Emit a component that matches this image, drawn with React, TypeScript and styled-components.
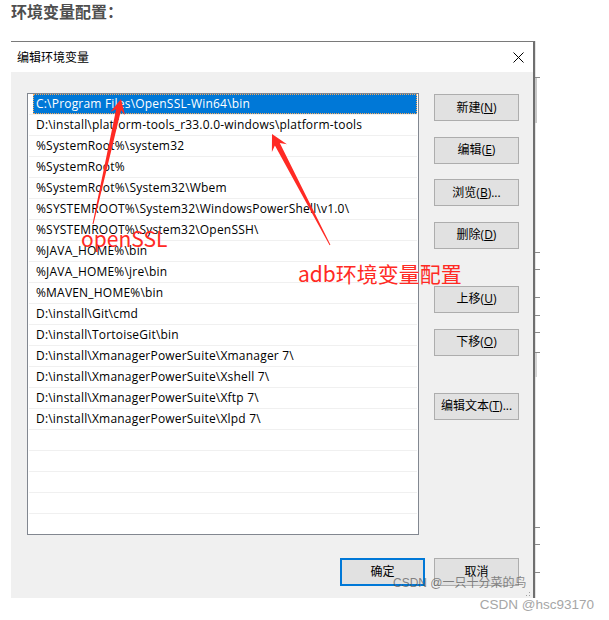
import React from "react";
import styled, { createGlobalStyle, css } from "styled-components";

const UI_FONT = `"Open Sans", "Noto Sans CJK SC", sans-serif`;
const CJK_FONT = `"Noto Sans CJK SC", "Noto Sans", sans-serif`;
const RED = "#ff2a24";

const GlobalStyle = createGlobalStyle`
  html, body { margin: 0; padding: 0; background: #fff; }
  body { font-family: ${UI_FONT}; }
`;

const Page = styled.div`
  position: relative;
  width: 609px;
  height: 620px;
  overflow: hidden;
`;

const Heading = styled.h4`
  margin: 0;
  padding-left: 11px;
  font: 700 16px/23px ${CJK_FONT};
  color: #4f4f4f;
`;

const Stage = styled.div`
  display: flex;
  margin: 18px 0 0 11px;
`;

const Dialog = styled.div`
  width: 524px;
  box-sizing: border-box;
  border-top: 1px solid #7a7a7a;
  border-right: 2px solid #6f6f6f;
  display: flex;
  flex-direction: column;
`;

const TitleBar = styled.div`
  height: 30px;
  background: #fff;
  display: flex;
  align-items: center;
  justify-content: space-between;
  padding: 0 9px 0 6px;
`;

const Title = styled.span`
  font: 400 12px/16px ${CJK_FONT};
  color: #000;
`;

const CloseIcon = styled.svg`
  width: 11px;
  height: 11px;
  display: block;
`;

const Body = styled.div`
  position: relative;
  background: #f0f0f0;
  padding: 21px 14px 12px 16px;
`;

const Main = styled.div`
  display: flex;
  gap: 15px;
`;

const ListBox = styled.div`
  width: 392px;
  height: 442px;
  box-sizing: border-box;
  border: 1px solid #828790;
  background: #fff;
  padding: 0 1px;
  overflow: hidden;
`;

const Row = styled.div`
  height: 21px;
  box-sizing: border-box;
  border-bottom: 1px solid #f0f0f0;
  padding-left: 4px;
  display: flex;
`;

const Cell = styled.div<{ $selected?: boolean }>`
  flex: 1;
  display: flex;
  align-items: center;
  padding-left: 3px;
  font: 400 12px/16px ${UI_FONT};
  letter-spacing: 0.2px;
  color: #000;
  white-space: nowrap;
  ${(p) =>
    p.$selected &&
    css`
      background: #0078d7;
      color: #fff;
      outline: 1px dotted #f6a85a;
      outline-offset: -1px;
    `}
`;

const ButtonColumn = styled.div`
  display: flex;
  flex-direction: column;
  gap: 15.67px;
  padding-top: 1px;
`;

const WinButton = styled.button<{ $default?: boolean; $gapBefore?: boolean; $tall?: boolean }>`
  box-sizing: border-box;
  width: 85px;
  height: ${(p) => (p.$tall ? 28 : 27)}px;
  margin: ${(p) => (p.$gapBefore ? "21.33px 0 0" : "0")};
  padding: 0;
  background: #e1e1e1;
  border: ${(p) => (p.$default ? "2px solid #0078d7" : "1px solid #adadad")};
  border-radius: 0;
  display: flex;
  align-items: center;
  justify-content: center;
  font: 400 12px/16px ${UI_FONT};
  color: #000;
  u {
    text-decoration: underline;
    text-underline-offset: 1px;
  }
`;

const Footer = styled.div`
  display: flex;
  justify-content: flex-end;
  gap: 9px;
  margin-top: 23px;
`;

const Watermark = styled.div`
  position: absolute;
  left: 382px;
  bottom: 8px;
  font: 400 12px/14px "Liberation Sans", ${CJK_FONT};
  color: rgba(85, 85, 85, 0.7);
  white-space: nowrap;
  pointer-events: none;
`;

const Grip = styled.svg`
  position: absolute;
  right: 2px;
  bottom: 1px;
  width: 5px;
  height: 5px;
`;

const EdgeStrip = styled.svg`
  width: 6px;
  height: 557px;
  display: block;
`;

const Credit = styled.div`
  display: flex;
  justify-content: flex-end;
  padding-right: 15px;
  margin-top: -1px;
  font: 400 13.5px/16px "Liberation Sans", sans-serif;
  color: #a6a6a6;
`;

const AnnotationLayer = styled.div`
  position: absolute;
  inset: 0;
  pointer-events: none;
`;

const ArrowCanvas = styled.svg`
  position: absolute;
  left: 0;
  top: 0;
  width: 609px;
  height: 620px;
`;

const Label = styled.div<{ $left: number; $top: number; $size: number }>`
  position: absolute;
  left: ${(p) => p.$left}px;
  top: ${(p) => p.$top}px;
  font: 400 ${(p) => p.$size}px/1 ${CJK_FONT};
  color: ${RED};
  white-space: nowrap;
`;

const paths = [
  "C:\\Program Files\\OpenSSL-Win64\\bin",
  "D:\\install\\platform-tools_r33.0.0-windows\\platform-tools",
  "%SystemRoot%\\system32",
  "%SystemRoot%",
  "%SystemRoot%\\System32\\Wbem",
  "%SYSTEMROOT%\\System32\\WindowsPowerShell\\v1.0\\",
  "%SYSTEMROOT%\\System32\\OpenSSH\\",
  "%JAVA_HOME%\\bin",
  "%JAVA_HOME%\\jre\\bin",
  "%MAVEN_HOME%\\bin",
  "D:\\install\\Git\\cmd",
  "D:\\install\\TortoiseGit\\bin",
  "D:\\install\\XmanagerPowerSuite\\Xmanager 7\\",
  "D:\\install\\XmanagerPowerSuite\\Xshell 7\\",
  "D:\\install\\XmanagerPowerSuite\\Xftp 7\\",
  "D:\\install\\XmanagerPowerSuite\\Xlpd 7\\",
  "",
  "",
  "",
  "",
  "",
];

function arrowPoints(
  tx: number,
  ty: number,
  hx: number,
  hy: number,
  headLen: number,
  headHalf: number,
  neckHalf: number
): string {
  const dx = hx - tx;
  const dy = hy - ty;
  const L = Math.hypot(dx, dy);
  const ux = dx / L;
  const uy = dy / L;
  const nx = -uy;
  const ny = ux;
  const bx = hx - ux * headLen;
  const by = hy - uy * headLen;
  const kx = hx - ux * headLen * 0.72;
  const ky = hy - uy * headLen * 0.72;
  const pts: [number, number][] = [
    [tx + nx * 0.5, ty + ny * 0.5],
    [kx + nx * neckHalf, ky + ny * neckHalf],
    [bx + nx * headHalf, by + ny * headHalf],
    [hx, hy],
    [bx - nx * headHalf, by - ny * headHalf],
    [kx - nx * neckHalf, ky - ny * neckHalf],
    [tx - nx * 0.5, ty - ny * 0.5],
  ];
  return pts.map((p) => `${p[0].toFixed(1)},${p[1].toFixed(1)}`).join(" ");
}

const sideButtons: { label: string; key: string; suffix?: string; gapBefore?: boolean }[] = [
  { label: "新建", key: "N" },
  { label: "编辑", key: "E" },
  { label: "浏览", key: "B", suffix: "..." },
  { label: "删除", key: "D" },
  { label: "上移", key: "U", gapBefore: true },
  { label: "下移", key: "O" },
  { label: "编辑文本", key: "T", suffix: "...", gapBefore: true },
];

export default function App() {
  return (
    <Page>
      <GlobalStyle />
      <Heading>环境变量配置：</Heading>
      <Stage>
        <Dialog>
          <TitleBar>
            <Title>编辑环境变量</Title>
            <CloseIcon viewBox="0 0 11 11">
              <path d="M0.5 0.5 L10.5 10.5 M10.5 0.5 L0.5 10.5" stroke="#000" strokeWidth="1" />
            </CloseIcon>
          </TitleBar>
          <Body>
            <Main>
              <ListBox>
                {paths.map((p, i) => (
                  <Row key={i}>
                    <Cell $selected={i === 0}>{p}</Cell>
                  </Row>
                ))}
              </ListBox>
              <ButtonColumn>
                {sideButtons.map((b) => (
                  <WinButton key={b.key} $gapBefore={b.gapBefore}>
                    {b.label}(<u>{b.key}</u>){b.suffix}
                  </WinButton>
                ))}
              </ButtonColumn>
            </Main>
            <Footer>
              <WinButton $default $tall>
                确定
              </WinButton>
              <WinButton $tall>取消</WinButton>
            </Footer>
            <Watermark>CSDN @一只十分菜的鸟</Watermark>
            <Grip viewBox="0 0 5 5">
              <rect x="3" y="0" width="1" height="1" fill="#a0a0a0" />
              <rect x="3" y="3" width="1" height="1" fill="#a0a0a0" />
              <rect x="0" y="3" width="1" height="1" fill="#a0a0a0" />
            </Grip>
          </Body>
        </Dialog>
        <EdgeStrip viewBox="0 0 6 557">
          <rect x="0" y="0" width="1" height="557" fill="#e4e4e4" />
          <rect x="0" y="37" width="2" height="45" fill="#c8c8c8" />
          <rect x="0" y="312" width="2" height="24" fill="#d4d4d4" />
          {[36, 211, 228, 256, 274, 291, 311, 486, 503, 531].map((y) => (
            <rect key={y} x="0" y={y} width="5" height="1" fill="#8a8a8a" />
          ))}
        </EdgeStrip>
      </Stage>
      <Credit>CSDN @hsc93170</Credit>
      <AnnotationLayer>
        <ArrowCanvas viewBox="0 0 609 620">
          <polygon points={arrowPoints(93, 224, 121, 99, 15, 7.5, 2.5)} fill={RED} />
          <polygon points={arrowPoints(330, 245, 272, 134, 16, 8.5, 2.8)} fill={RED} />
        </ArrowCanvas>
        <Label $left={81} $top={228} $size={21}>
          openSSL
        </Label>
        <Label $left={298} $top={263} $size={21}>
          adb环境变量配置
        </Label>
      </AnnotationLayer>
    </Page>
  );
}
